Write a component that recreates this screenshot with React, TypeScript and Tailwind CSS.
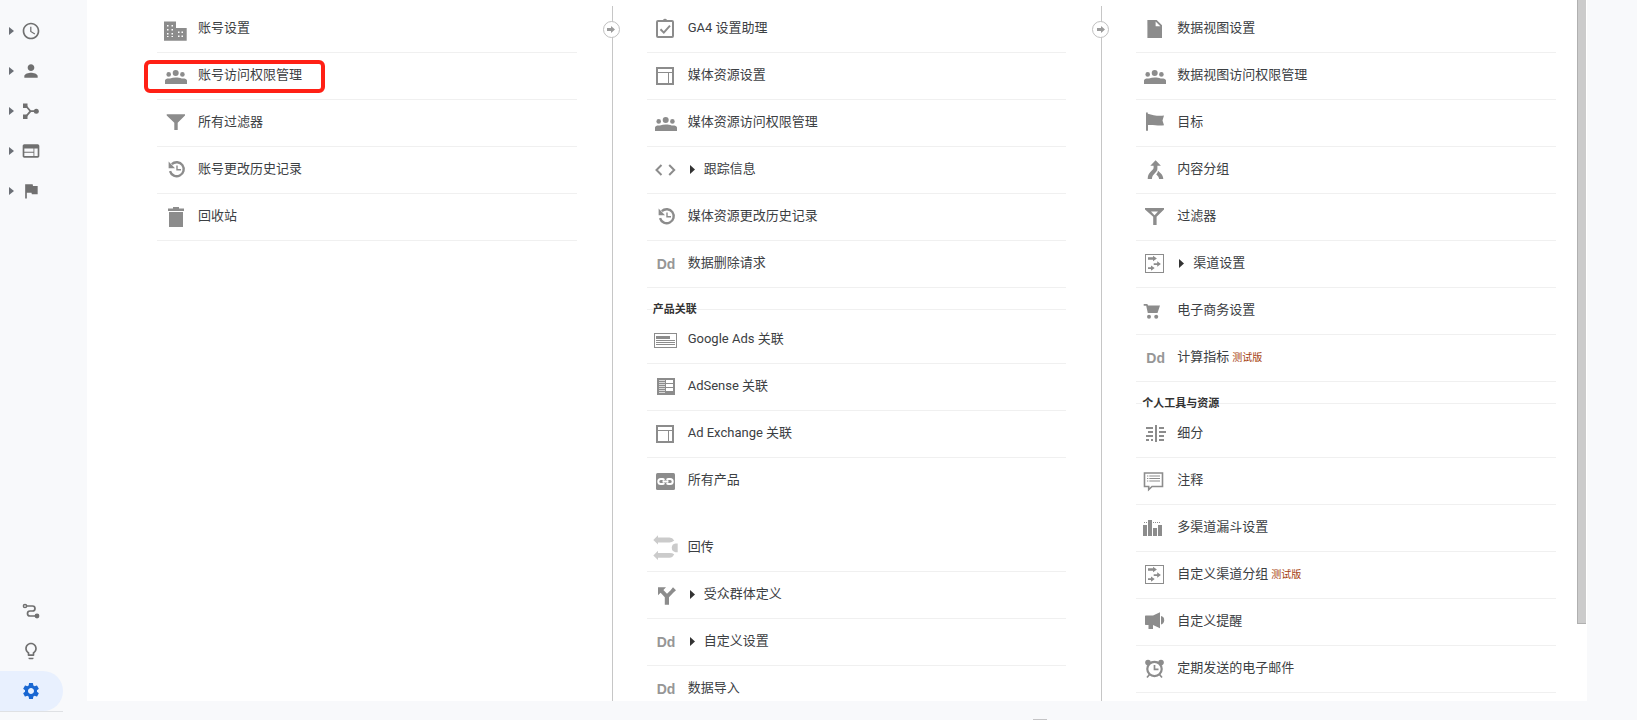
// ============================================================
// Page — Analytics Admin (account / property / view columns)
// ============================================================

import type { ReactNode } from "react";
import {
  MdAccessTime,
  MdFlag,
  MdLightbulbOutline,
  MdPerson,
  MdSettings,
  MdWeb,
} from "react-icons/md";

interface AdminItem {
  label: string;
  icon: ReactNode;
  expandable?: boolean;
  beta?: boolean;
  highlighted?: boolean;
  borderless?: boolean;
  spaced?: boolean;
}

interface AdminGroup {
  title?: string;
  items: AdminItem[];
}

// ---------- Icons ----------

function Glyph({ children }: { children: ReactNode }) {
  return (
    <svg className="h-6 w-6 overflow-visible" viewBox="0 0 24 24" fill="currentColor" aria-hidden="true">
      {children}
    </svg>
  );
}

const building = (
  <Glyph>
    <path d="M1 4.500h12V11h10.700v12.700H1z" />
    <g fill="#fff">
      <path d="M4 8h1.500v1.500H4zM8.500 8H10v1.500H8.500zM4 12h1.500v1.500H4zM8.500 12H10v1.500H8.500zM4 16h1.500v1.500H4zM8.500 16H10v1.500H8.500zM4 19h1.500v1H4zM8.500 19H10v1H8.500z" />
      <path d="M15 14.500h1.500V16H15zM18.500 14.500H20V16h-1.500zM15 18.500h1.500V20H15zM18.500 18.500H20V20h-1.500z" />
    </g>
  </Glyph>
);

const people = (
  <Glyph>
    <circle cx="5.700" cy="10.400" r="2.300" />
    <circle cx="12.700" cy="9" r="3" />
    <circle cx="19.400" cy="10.400" r="2.300" />
    <path d="M2 20v-3.500C2 14.800 4.500 14.200 7 14.500c3.400-1.400 8.400-1.400 11.600 0 2.600-.3 5.400.3 5.400 2V20z" />
  </Glyph>
);

const funnel = (
  <Glyph>
    <path d="M3.700 3.200H22v1.300l-7.300 7.300V19h-3.400v-7.200L3.700 4.500z" />
  </Glyph>
);

const history = (
  <Glyph>
    <path d="M7 13.200a7 7 0 1 0 1.800-7" fill="none" stroke="currentColor" strokeWidth="2.400" />
    <path d="M5.600 3.500v6.700H12z" />
    <path d="M14 7.500v4.300h4" fill="none" stroke="currentColor" strokeWidth="1.400" />
  </Glyph>
);

const trash = (
  <Glyph>
    <path d="M5 3.500h5V2h6v1.500h5V6H5zM6 7h14v15H6z" />
  </Glyph>
);

const clipboard = (
  <Glyph>
    <rect x="4" y="4" width="16" height="16" rx="1" fill="none" stroke="currentColor" strokeWidth="2" />
    <path d="M8.500 4.500V3H10a2.200 2.200 0 0 1 4 0h1.500v1.500z" />
    <path d="m7.500 12.300 3.300 3.300 6.200-7" fill="none" stroke="currentColor" strokeWidth="2" />
  </Glyph>
);

const layout = (
  <Glyph>
    <rect x="4" y="4" width="16" height="16" fill="none" stroke="currentColor" strokeWidth="2" />
    <path d="M5 8h14v1H5zM15 9h1v10h-1z" />
  </Glyph>
);

const code = (
  <Glyph>
    <path d="m8.500 7-5 5 5 5M16.200 7l5 5-5 5" fill="none" stroke="currentColor" strokeWidth="2" />
  </Glyph>
);

const dd = (
  <span className="pl-1 font-['Liberation_Sans',sans-serif] text-[14px] leading-6 font-bold text-[#969696]">Dd</span>
);

const adCard = (
  <Glyph>
    <rect x="1.500" y="5.500" width="22" height="14" fill="none" stroke="currentColor" />
    <path d="M3 8h14v3H3zM3 12h19v1H3zM3 14h19v1H3zM3 16h19v1H3z" />
  </Glyph>
);

const adSense = (
  <Glyph>
    <path d="M4 3h18v17H4z" />
    <path d="M6 5h6v1H6zM6 7h6v1H6zM6 9h6v1H6zM6 11h6v1H6zM6 13h6v1H6zM6 15h6v1H6zM6 17h6v1H6z" fill="#d8d8d8" />
    <path d="M13 5h7v3h-7zM13 9h7v3h-7zM13 13h7v3h-7z" fill="#fff" />
  </Glyph>
);

const linkBox = (
  <Glyph>
    <rect x="3" y="4" width="19" height="17" rx="1.500" />
    <g fill="none" stroke="#fff" strokeWidth="2">
      <path d="M11.300 10.900a2.600 2.600 0 0 0-1.800-.9H7.800a2.500 2.500 0 0 0 0 5h1.700a2.600 2.600 0 0 0 1.800-.9M13.700 10.900a2.600 2.600 0 0 1 1.800-.9h1.700a2.500 2.500 0 0 1 0 5h-1.700a2.600 2.600 0 0 1-1.800-.9M9.500 12.500h6" />
    </g>
  </Glyph>
);

const postback = (
  <Glyph>
    <g fill="#cbcbcb">
      <path d="M.3 3.900 5-.8v2.400h11.500q3 0 4.700 2.900-2.200 1.900-4.700 1.900H5v2.200zM.3 19.400 5 14.800V17h11.500q3 0 4.700 1.300-1.700 3.500-4.700 3.500H5V24z" />
      <path d="M24.700 7.500v8.700h-2.200a4.400 4.400 0 0 1 0-8.700z" />
    </g>
  </Glyph>
);

const split = (
  <Glyph>
    <path d="M5 4.300h8l-2.600 2.600 3.600 3.800 3.900-3.700-.1-.1 2.200-2.600L23 7.200l-2.500 2.300-4.500 4.700v7.500h-4.200v-7.500L7.600 9.700 5 12.300z" />
  </Glyph>
);

const file = (
  <Glyph>
    <path d="M5.400 3h9.300l5.300 5.200V21H5.400z" />
    <path d="M13.600 4.500v4.700h4.800z" fill="#fff" />
  </Glyph>
);

const wavyFlag = (
  <Glyph>
    <path d="M4 1.500h1.800v1.200c5 1.600 10 2.600 16.200 1.900l-1.500 5 1.500 4.700c-5.500.7-9.800-.5-16-.2v5.700H4z" />
  </Glyph>
);

const merge = (
  <Glyph>
    <path d="m13.600 2.200 5.300 5.500h-3.500v3.100c0 1.200-.4 2-1.200 2.900l-2.900 3.200c-.9 1-1.200 2-1.400 4H5.700c.1-3 .8-4.800 2.700-6.800l2.400-2.600c.6-.6.8-1.100.8-2V7.700H8.300z" />
    <path d="m15.800 12.500 2.600 2.400c1.900 1.800 2.700 3.300 2.900 6h-4.200c-.2-1.600-.7-2.400-1.800-3.500l-1.100-1.100c1.300-1.200 1.800-2 1.600-3.800z" />
  </Glyph>
);

const funnelOutline = (
  <Glyph>
    <path d="M3 3h19v1.500l-7.400 7.200V20h-3.400v-8.300L3 4.500z" />
    <path d="M9 6.500h7l-3.500 3.700z" fill="#fff" />
  </Glyph>
);

const channels = (
  <Glyph>
    <rect x="3.500" y="2.500" width="18" height="18" fill="none" stroke="currentColor" />
    <path d="M6 5.200h5V3.700l3.900 2.800L11 9.200V7.700H6zM11.700 11.200h3.500V9.300l3.700 2.700-3.700 2.800v-1.900h-3.500zM6 15.300h3v-1.900l3.700 2.700L9 18.800v-1.900H6z" />
  </Glyph>
);

const cart = (
  <Glyph>
    <path d="M1.700 5h3.600l.8 1.600H18L15.500 14H5.800L4.200 6.700H1.700z" />
    <circle cx="7" cy="17.800" r="2" />
    <circle cx="14.200" cy="17.800" r="2" />
  </Glyph>
);

const segments = (
  <Glyph>
    <path d="M13 3h2v17h-2zM4 5h7v2H4zM6 9h5v2H6zM4 13h7v2H4zM4 17h3v2H4zM9 17h2v2H9zM17 5h5v2h-5zM17 9h7v2h-7zM17 13h5v2h-5zM17 17h5v2h-5z" />
  </Glyph>
);

const comment = (
  <Glyph>
    <path d="M2.500 4h18v13.500H10L6.700 20.700v-3.200H2.500z" fill="none" stroke="currentColor" strokeWidth="1.600" />
    <path d="M5 6.500h1.300v1H5zM7.300 6.500H18v1H7.300zM5 9h1.300v1H5zM7.300 9H18v1H7.300zM5 11.500h1.300v1H5zM7.300 11.500H18v1H7.300z" />
  </Glyph>
);

const bars = (
  <Glyph>
    <path d="M1 9h4v11H1zM6 4h4v16H6zM11 12h4v8h-4zM16 9h4v11h-4z" />
    <path d="M2 6h1v1H2zM4 6h1v1H4zM11 6h1v1h-1zM13 6h1v1h-1zM15 6h1v1h-1zM17 6h1v1h-1z" />
  </Glyph>
);

const megaphone = (
  <Glyph>
    <path d="M4 5.500h7L18 2.300v16l-7-3.200v4H6.500v-4H4c-.7 0-1-.3-1-1V6.500c0-.7.3-1 1-1z" />
    <path d="M19 6c2 .3 3.200 1.800 3.200 4.200S21 14 19 14.500z" />
  </Glyph>
);

const alarm = (
  <Glyph>
    <circle cx="6" cy="5.600" r="2.800" />
    <circle cx="19" cy="5.600" r="2.800" />
    <circle cx="12.500" cy="12" r="7.200" fill="#fff" stroke="currentColor" strokeWidth="2.200" />
    <path d="M12.500 8v4.300h4M7.500 17.500l-2.500 3M17.500 17.500l2.500 3" fill="none" stroke="currentColor" strokeWidth="1.700" />
  </Glyph>
);

// ---------- Data ----------

const accountGroups: AdminGroup[] = [
  {
    items: [
      { label: "账号设置", icon: building },
      { label: "账号访问权限管理", icon: people, highlighted: true },
      { label: "所有过滤器", icon: funnel },
      { label: "账号更改历史记录", icon: history },
      { label: "回收站", icon: trash },
    ],
  },
];

const propertyGroups: AdminGroup[] = [
  {
    items: [
      { label: "GA4 设置助理", icon: clipboard },
      { label: "媒体资源设置", icon: layout },
      { label: "媒体资源访问权限管理", icon: people },
      { label: "跟踪信息", icon: code, expandable: true },
      { label: "媒体资源更改历史记录", icon: history },
      { label: "数据删除请求", icon: dd },
    ],
  },
  {
    title: "产品关联",
    items: [
      { label: "Google Ads 关联", icon: adCard },
      { label: "AdSense 关联", icon: adSense },
      { label: "Ad Exchange 关联", icon: layout },
      { label: "所有产品", icon: linkBox, borderless: true },
      { label: "回传", icon: postback, spaced: true },
      { label: "受众群体定义", icon: split, expandable: true },
      { label: "自定义设置", icon: dd, expandable: true },
      { label: "数据导入", icon: dd },
    ],
  },
];

const viewGroups: AdminGroup[] = [
  {
    items: [
      { label: "数据视图设置", icon: file },
      { label: "数据视图访问权限管理", icon: people },
      { label: "目标", icon: wavyFlag },
      { label: "内容分组", icon: merge },
      { label: "过滤器", icon: funnelOutline },
      { label: "渠道设置", icon: channels, expandable: true },
      { label: "电子商务设置", icon: cart },
      { label: "计算指标", icon: dd, beta: true },
    ],
  },
  {
    title: "个人工具与资源",
    items: [
      { label: "细分", icon: segments },
      { label: "注释", icon: comment },
      { label: "多渠道漏斗设置", icon: bars },
      { label: "自定义渠道分组", icon: channels, beta: true },
      { label: "自定义提醒", icon: megaphone },
      { label: "定期发送的电子邮件", icon: alarm },
    ],
  },
];

// ---------- Sidebar ----------

const reportNav = [
  { name: "实时", icon: <MdAccessTime size={20} /> },
  { name: "受众群体", icon: <MdPerson size={20} /> },
  {
    name: "流量获取",
    icon: (
      <svg className="h-5 w-5" viewBox="0 0 20 20" fill="currentColor" aria-hidden="true">
        <path d="M2 2.500h4.500V7H2zM2 13.500h4.500V18H2z" />
        <circle cx="15.300" cy="10.200" r="2.500" />
        <path d="m5 5 4.500 5.200L5 15.500M9.500 10.200h5" fill="none" stroke="currentColor" strokeWidth="1.800" />
      </svg>
    ),
  },
  { name: "行为", icon: <MdWeb size={20} /> },
  { name: "转化", icon: <MdFlag size={20} /> },
];

function Sidebar() {
  return (
    <nav className="flex w-[87px] flex-shrink-0 flex-col justify-between pt-[11px] pb-2 text-[#707070]">
      <div>
        {reportNav.map((item) => (
          <button key={item.name} type="button" aria-label={item.name} className="flex h-10 w-[63px] items-center gap-[7px] pl-[9px]">
            <Caret className="h-2 w-[5px] text-[#6b6f76]" />
            {item.icon}
          </button>
        ))}
      </div>
      <div className="w-[63px] border-b border-[#dfe1e4]">
        <button type="button" aria-label="归因" className="flex h-10 w-full items-center pl-[21px]">
          <svg className="h-5 w-5" viewBox="0 0 20 20" fill="none" stroke="currentColor" aria-hidden="true">
            <circle cx="4" cy="5" r="1.600" strokeWidth="1.500" />
            <path d="M5.700 5h5.800a2.500 2.500 0 0 1 0 5H9a2.500 2.500 0 0 0 0 5h5.500" strokeWidth="1.700" />
            <circle cx="16" cy="15" r="2.400" fill="currentColor" stroke="none" />
          </svg>
        </button>
        <button type="button" aria-label="发现" className="flex h-10 w-full items-center pl-[21px]">
          <MdLightbulbOutline size={20} />
        </button>
        <button type="button" aria-label="管理" className="flex h-10 w-full items-center rounded-r-full bg-[#e8f0fe] pl-[21px] text-[#1967d2]">
          <MdSettings size={20} />
        </button>
      </div>
    </nav>
  );
}

// ---------- Admin columns ----------

function Caret({ className }: { className: string }) {
  return (
    <svg className={className} viewBox="0 0 5 9" preserveAspectRatio="none" fill="currentColor" aria-hidden="true">
      <path d="M0 0l5 4.500L0 9z" />
    </svg>
  );
}

function AdminRow({ item }: { item: AdminItem }) {
  return (
    <li
      className={`relative border-b ${item.borderless ? "border-transparent" : "border-[#f0f0f0]"} ${item.spaced ? "mt-5" : ""}`}
    >
      <a href="#" className="flex h-[46px] items-center pl-1.5">
        <span className="flex h-6 w-[35px] flex-shrink-0 items-center text-[#8c8c8c]">{item.icon}</span>
        {item.expandable && <Caret className="mr-[9px] mb-px ml-0.5 h-[9px] w-[5px] text-[#333]" />}
        <span className="pb-0.5 text-[13px] leading-5">{item.label}</span>
        {item.beta && <span className="ml-[3px] text-[10px] leading-4 text-[#a5410c]">测试版</span>}
      </a>
      {item.highlighted && (
        <span className="pointer-events-none absolute top-[7px] -left-[13px] h-[33px] w-[181px] rounded-md border-4 border-[#ff2015]" />
      )}
    </li>
  );
}

function AdminColumn({ groups }: { groups: AdminGroup[] }) {
  return (
    <section className="min-w-0 flex-1">
      {groups.map((group, index) => (
        <div key={index}>
          {group.title && (
            <div className="flex h-[29px] items-center pt-3.5">
              <span className="h-px w-1.5 bg-[#f0f0f0]" />
              <h2 className="text-[11px] leading-4 font-bold text-[#333]">{group.title}</h2>
              <span className="h-px flex-1 bg-[#f0f0f0]" />
            </div>
          )}
          <ul>
            {group.items.map((item) => (
              <AdminRow key={item.label} item={item} />
            ))}
          </ul>
        </div>
      ))}
    </section>
  );
}

function ColumnDivider() {
  return (
    <div className="relative w-[70px] flex-shrink-0 pl-[35px]">
      <div className="h-full w-px bg-[#c6c6c6]" />
      <button
        type="button"
        aria-label="移动列"
        className="absolute top-[15px] left-[26px] flex h-[17px] w-[17px] items-center justify-center rounded-full border border-[#c0c0c0] bg-white text-[#9a9a9a]"
      >
        <svg className="h-[7px] w-2" viewBox="0 0 8 7" fill="currentColor" aria-hidden="true">
          <path d="M0 2h4V0l4 3.500L4 7V5H0z" />
        </svg>
      </button>
    </div>
  );
}

export default function App() {
  return (
    <div className="flex h-screen overflow-hidden bg-[#f8f9fb] font-[Roboto,'Noto_Sans_CJK_SC',sans-serif] text-[#3c4043]">
      <Sidebar />
      <div className="flex min-w-0 flex-1 flex-col">
        <main className="mr-[50px] flex min-h-0 flex-1 overflow-hidden bg-white pt-1.5 pr-px pl-[70px]">
          <div className="flex min-w-0 flex-1">
            <AdminColumn groups={accountGroups} />
            <ColumnDivider />
            <AdminColumn groups={propertyGroups} />
            <ColumnDivider />
            <AdminColumn groups={viewGroups} />
          </div>
          {/* Scrollbar thumb */}
          <div className="-mt-1.5 ml-[21px] h-[calc(90%-2px)] w-[9px] flex-shrink-0 border-b border-l border-[#b0b0b0] bg-[#cbcbcb]" />
        </main>
        <footer className="flex h-[19px] flex-shrink-0 items-end pl-[946px]">
          <div className="h-px w-3.5 bg-[#c4c4c6]" />
        </footer>
      </div>
    </div>
  );
}
